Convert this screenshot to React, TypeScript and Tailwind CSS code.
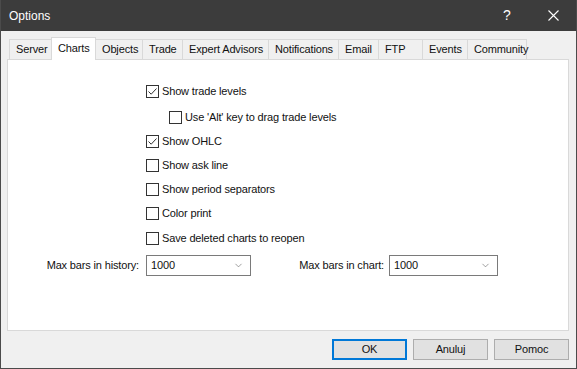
import { ChevronDown } from "lucide-react";

type Tab = { label: string; width: string };

const tabs: Tab[] = [
  { label: "Server", width: "w-[43px]" },
  { label: "Charts", width: "w-[45px]" },
  { label: "Objects", width: "w-[48px]" },
  { label: "Trade", width: "w-[41px]" },
  { label: "Expert Advisors", width: "w-[87px]" },
  { label: "Notifications", width: "w-[71px]" },
  { label: "Email", width: "w-[41px]" },
  { label: "FTP", width: "w-[45px]" },
  { label: "Events", width: "w-[46px]" },
  { label: "Community", width: "w-[60px]" },
];

const options = [
  { label: "Show trade levels", checked: true, extra: "" },
  { label: "Use 'Alt' key to drag trade levels", checked: false, extra: "mt-[2px] pl-[23px]" },
  { label: "Show OHLC", checked: true, extra: "" },
  { label: "Show ask line", checked: false, extra: "" },
  { label: "Show period separators", checked: false, extra: "" },
  { label: "Color print", checked: false, extra: "" },
  { label: "Save deleted charts to reopen", checked: false, extra: "mt-[1px]" },
];

function Checkbox({ checked }: { checked: boolean }) {
  return (
    <span className="grid h-[13px] w-[13px] shrink-0 place-items-center border border-[#333333] bg-white">
      {checked && (
        <svg width="11" height="11" viewBox="0 0 11 11" fill="none">
          <path d="M1.5 5.5 L4.2 8.2 L9.5 2.5" stroke="#333333" strokeWidth="1" />
        </svg>
      )}
    </span>
  );
}

function Select({ value, width }: { value: string; width: string }) {
  return (
    <div className={`flex h-[21px] ${width} items-center justify-between border border-[#7a7a7a] bg-white pl-[4px] pr-[6px]`}>
      <span>{value}</span>
      <ChevronDown className="h-[11px] w-[11px] text-[#606060]" strokeWidth={1.3} />
    </div>
  );
}

export default function App() {
  return (
    <div className="flex h-[369px] w-[577px] flex-col border border-t-0 border-[#4b4b4b] bg-[#f0f0f0] font-['Liberation_Sans',Arial,sans-serif] text-[11px] tracking-[-0.15px] text-[#111111]">
      <div className="flex h-[31px] shrink-0 items-center bg-[#3c3c3c] pl-[8px] text-[12px] tracking-normal text-white">
        <span className="flex-1">Options</span>
        <span className="grid h-full w-[46px] place-items-center text-[14px]">?</span>
        <span className="grid h-full w-[46px] place-items-center">
          <svg width="11" height="11" viewBox="0 0 11 11" fill="none">
            <path d="M0.5 0.5 L10.5 10.5 M10.5 0.5 L0.5 10.5" stroke="#ffffff" strokeWidth="1.1" />
          </svg>
        </span>
      </div>

      <div className="flex flex-1 flex-col pl-[6px] pr-[7px] pt-[6px]">
        <div className="flex h-[22px] items-end pl-[2px]">
          {tabs.map((tab, i) => {
            const active = tab.label === "Charts";
            return (
              <div
                key={tab.label}
                className={`flex ${tab.width} shrink-0 items-center border border-b-0 border-[#d9d9d9] pl-[6px] ${i > 0 ? "-ml-px" : ""} ${
                  active ? "relative z-10 -mb-px h-[23px] bg-white pb-[2px]" : "h-[20px] bg-[#f0f0f0]"
                }`}
              >
                {tab.label}
              </div>
            );
          })}
        </div>

        <div className="flex h-[272px] flex-col border border-[#d9d9d9] bg-white pt-[19px]">
          <div className="flex flex-col pl-[138px]">
            {options.map((opt) => (
              <label key={opt.label} className={`flex h-[24px] items-center gap-[3px] ${opt.extra}`}>
                <Checkbox checked={opt.checked} />
                <span>{opt.label}</span>
              </label>
            ))}
          </div>

          <div className="mt-[5px] flex items-center">
            <span className="w-[138px] pr-[7px] text-right">Max bars in history:</span>
            <Select value="1000" width="w-[105px]" />
            <span className="w-[138px] pr-[5px] text-right">Max bars in chart:</span>
            <Select value="1000" width="w-[109px]" />
          </div>
        </div>

        <div className="flex justify-end gap-[6px] pt-[8px]">
          <button
            type="button"
            className="h-[21px] w-[75px] border border-[#0078d7] bg-[#e1e1e1] shadow-[inset_0_0_0_1px_#0078d7]"
          >
            OK
          </button>
          <button type="button" className="h-[21px] w-[75px] border border-[#adadad] bg-[#e1e1e1]">
            Anuluj
          </button>
          <button type="button" className="h-[21px] w-[75px] border border-[#adadad] bg-[#e1e1e1]">
            Pomoc
          </button>
        </div>
      </div>
    </div>
  );
}
